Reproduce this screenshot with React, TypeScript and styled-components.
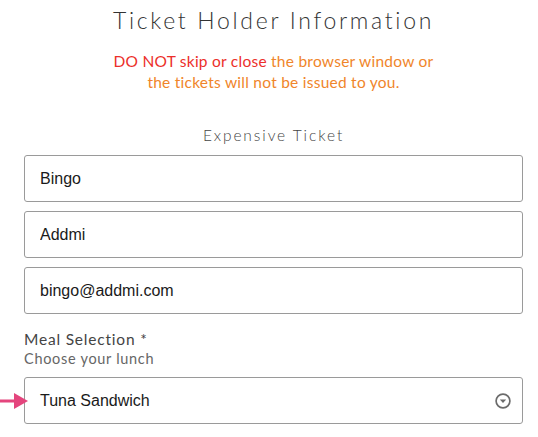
import * as React from 'react';
import styled, { createGlobalStyle } from 'styled-components';

const GlobalStyle = createGlobalStyle`
  html, body {
    margin: 0;
    padding: 0;
    background: #fff;
  }
  body {
    font-family: Lato, "Open Sans", sans-serif;
    -webkit-font-smoothing: antialiased;
  }
`;

const Page = styled.div`
  width: 538px;
  box-sizing: border-box;
  padding: 5px 15px 0 24px;
  display: flex;
  flex-direction: column;
`;

const Title = styled.h1`
  margin: 0;
  font-family: Lato, sans-serif;
  font-weight: 300;
  font-size: 23px;
  line-height: 30px;
  letter-spacing: 2.7px;
  color: #333;
  text-align: center;
`;

const Warning = styled.p`
  margin: 16px 0 0;
  font-size: 15.5px;
  line-height: 21px;
  letter-spacing: 0.25px;
  color: #f0852a;
  text-align: center;
`;

const Danger = styled.span`
  color: #ec2f2a;
`;

const SectionTitle = styled.h2`
  margin: 32px 0 0;
  font-weight: 300;
  font-size: 15.5px;
  line-height: 20px;
  letter-spacing: 1.9px;
  color: #444;
  text-align: center;
`;

const Fields = styled.div`
  display: flex;
  flex-direction: column;
  gap: 9px;
  margin-top: 10px;
`;

const Input = styled.input`
  box-sizing: border-box;
  width: 100%;
  height: 47px;
  margin: 0;
  padding: 0 15px;
  border: 1px solid #9a9a9a;
  border-radius: 3px;
  font-family: "Liberation Sans", Arial, sans-serif;
  font-size: 16px;
  color: #1a1a1a;
  background: #fff;
  outline: none;
`;

const FieldLabel = styled.div`
  margin-top: 15px;
  font-size: 15.5px;
  line-height: 20px;
  letter-spacing: 0.8px;
  color: #444;
`;

const FieldHint = styled.div`
  font-size: 14.5px;
  line-height: 20px;
  letter-spacing: 0.7px;
  color: #666;
`;

const SelectWrap = styled.div`
  position: relative;
  margin-top: 8px;
`;

const SelectBox = styled.div`
  box-sizing: border-box;
  height: 47px;
  padding: 0 11px 0 15px;
  border: 1px solid #9a9a9a;
  border-radius: 3px;
  display: flex;
  align-items: center;
  justify-content: space-between;
  font-family: "Liberation Sans", Arial, sans-serif;
  font-size: 16px;
  color: #1a1a1a;
`;

const Pointer = styled.svg`
  position: absolute;
  left: -24px;
  top: 16px;
`;

function ChevronCircle() {
  return (
    <svg width="16" height="16" viewBox="0 0 16 16">
      <circle cx="8" cy="8" r="6.9" fill="none" stroke="#6b6b6b" strokeWidth="1.7" />
      <path d="M4.8 6.4 L11.2 6.4 L8 10 Z" fill="#6b6b6b" />
    </svg>
  );
}

export default function App() {
  return (
    <>
      <GlobalStyle />
      <Page>
        <Title>Ticket Holder Information</Title>
        <Warning>
          <Danger>DO NOT skip or close</Danger> the browser window or
          <br />
          the tickets will not be issued to you.
        </Warning>
        <SectionTitle>Expensive Ticket</SectionTitle>
        <Fields>
          <Input defaultValue="Bingo" />
          <Input defaultValue="Addmi" />
          <Input defaultValue="bingo@addmi.com" />
        </Fields>
        <FieldLabel>Meal Selection *</FieldLabel>
        <FieldHint>Choose your lunch</FieldHint>
        <SelectWrap>
          <Pointer width="28" height="16" viewBox="0 0 28 16">
            <rect x="0" y="6.5" width="15" height="3" fill="#e4457d" />
            <path d="M14 0 L28 8 L14 16 Z" fill="#e4457d" />
          </Pointer>
          <SelectBox>
            <span>Tuna Sandwich</span>
            <ChevronCircle />
          </SelectBox>
        </SelectWrap>
      </Page>
    </>
  );
}
